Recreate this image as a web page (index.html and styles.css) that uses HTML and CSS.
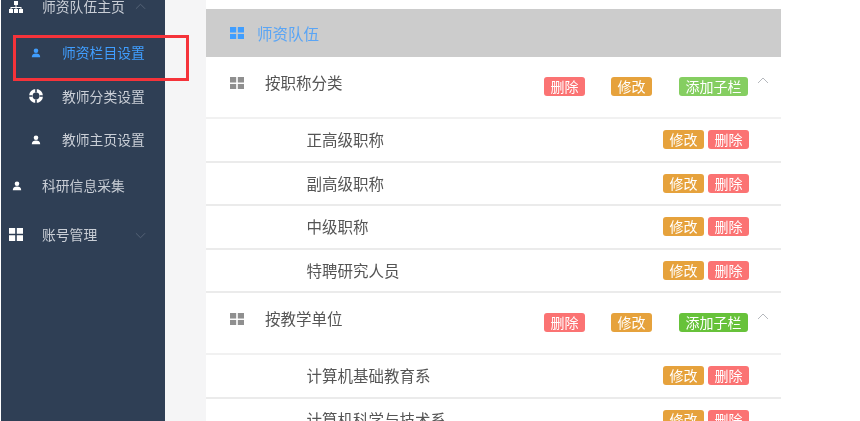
FILE: index.html
```html
<!DOCTYPE html>
<html lang="zh-CN">
<head>
  <meta charset="UTF-8">
  <title>师资队伍</title>
  <link rel="stylesheet" href="styles.css">
</head>
<body>

  <svg class="defs" width="0" height="0">
    <symbol id="i-user" viewBox="0 0 10 10">
      <circle cx="5" cy="2.8" r="2.3"/>
      <path d="M0.8 9.2C0.8 6.6 2.6 5.6 5 5.6S9.2 6.6 9.2 9.2Z"/>
    </symbol>
    <symbol id="i-grid" viewBox="0 0 14 14" preserveAspectRatio="none">
      <rect x="0" y="0" width="6.2" height="6.2"/>
      <rect x="7.8" y="0" width="6.2" height="6.2"/>
      <rect x="0" y="7.8" width="6.2" height="6.2"/>
      <rect x="7.8" y="7.8" width="6.2" height="6.2"/>
    </symbol>
    <symbol id="i-tree" viewBox="0 0 14 12">
      <rect x="5" y="0" width="4" height="4"/>
      <rect x="0" y="8" width="4" height="4"/>
      <rect x="5" y="8" width="4" height="4"/>
      <rect x="10" y="8" width="4" height="4"/>
      <path d="M6.5 4h1v2H12.5v2h-1V7h-4v1h-1V7h-4v1h-1V6h5z"/>
    </symbol>
    <symbol id="i-ring" viewBox="0 0 14 14">
      <path fill-rule="evenodd" d="M7 0a7 7 0 1 0 0 14A7 7 0 0 0 7 0Zm0 3.6a3.4 3.4 0 1 1 0 6.8 3.4 3.4 0 0 1 0-6.8Z"/>
      <path class="ring-cut" d="M7 0V3.4M7 10.6V14M0 7H3.4M10.6 7H14"/>
    </symbol>
  </svg>

  <div class="page">
    <aside class="sidebar">
      <div class="menu-item">
        <svg class="ico ico-tree"><use href="#i-tree"/></svg>
        <span class="menu-label">师资队伍主页</span>
        <svg class="arrow" viewBox="0 0 12 7"><path d="M1 6 6 1l5 5"/></svg>
      </div>
      <div class="sub-item active">
        <svg class="ico ico-user"><use href="#i-user"/></svg>
        <span>师资栏目设置</span>
      </div>
      <div class="sub-item">
        <svg class="ico ico-ring"><use href="#i-ring"/></svg>
        <span>教师分类设置</span>
      </div>
      <div class="sub-item">
        <svg class="ico ico-user"><use href="#i-user"/></svg>
        <span>教师主页设置</span>
      </div>
      <div class="menu-item">
        <svg class="ico ico-user"><use href="#i-user"/></svg>
        <span class="menu-label">科研信息采集</span>
      </div>
      <div class="menu-item">
        <svg class="ico ico-grid"><use href="#i-grid"/></svg>
        <span class="menu-label">账号管理</span>
        <svg class="arrow" viewBox="0 0 12 7"><path d="M1 1l5 5 5-5"/></svg>
      </div>
    </aside>

    <main class="content">
      <div class="panel-head">
        <svg class="grid-ico"><use href="#i-grid"/></svg>
        <span>师资队伍</span>
      </div>

      <div class="group">
        <svg class="grid-ico"><use href="#i-grid"/></svg>
        <span class="group-name">按职称分类</span>
        <span class="tag red">删除</span>
        <span class="tag orange">修改</span>
        <span class="tag light-green">添加子栏</span>
        <svg class="group-arrow" viewBox="0 0 12 7"><path d="M1 6 6 1l5 5"/></svg>
      </div>
      <div class="row"><span class="row-name">正高级职称</span><span class="tag orange">修改</span><span class="tag red">删除</span></div>
      <div class="row"><span class="row-name">副高级职称</span><span class="tag orange">修改</span><span class="tag red">删除</span></div>
      <div class="row"><span class="row-name">中级职称</span><span class="tag orange">修改</span><span class="tag red">删除</span></div>
      <div class="row"><span class="row-name">特聘研究人员</span><span class="tag orange">修改</span><span class="tag red">删除</span></div>

      <div class="group">
        <svg class="grid-ico"><use href="#i-grid"/></svg>
        <span class="group-name">按教学单位</span>
        <span class="tag red">删除</span>
        <span class="tag orange">修改</span>
        <span class="tag green">添加子栏</span>
        <svg class="group-arrow" viewBox="0 0 12 7"><path d="M1 6 6 1l5 5"/></svg>
      </div>
      <div class="row"><span class="row-name">计算机基础教育系</span><span class="tag orange">修改</span><span class="tag red">删除</span></div>
      <div class="row"><span class="row-name">计算机科学与技术系</span><span class="tag orange">修改</span><span class="tag red">删除</span></div>
    </main>
  </div>

  <div class="highlight"></div>

</body>
</html>
```

FILE: styles.css
```css
html, body {
  margin: 0;
  padding: 0;
  height: 421px;
  overflow: hidden;
  background: #fff;
}
body {
  font-family: "Noto Sans CJK SC", "Noto Sans", sans-serif;
  font-size: 15.5px;
}
.defs { position: absolute; }

.page {
  display: flex;
  height: 421px;
  overflow: hidden;
  padding-left: 1px;
  filter: blur(0.5px);
}

/* sidebar, scrolled a little past its top */
.sidebar {
  flex: 0 0 164px;
  background: #2f3f55;
  color: #c9ced6;
  font-size: 13.8px;
  line-height: 20px;
  overflow: hidden;
}
.menu-item {
  display: flex;
  align-items: center;
  height: 49px;
  padding-left: 8px;
  position: relative;
}
.menu-item:first-child { margin-top: -18px; height: 50px; }
.menu-label { position: absolute; left: 41px; top: 12px; }
.menu-item .ico-user { margin-left: 3px; margin-top: -2px; }
.menu-item .ico-grid { margin-top: -3px; }
.menu-item:first-child .menu-label { top: 14px; }
.arrow {
  position: absolute;
  left: 134px;
  top: 50%;
  width: 11px;
  height: 7px;
  margin-top: -4px;
  fill: none;
  stroke: #59677a;
  stroke-width: 1;
}
.sub-item {
  display: flex;
  align-items: center;
  height: 43.5px;
  padding-left: 29px;
  position: relative;
}
.sub-item span { position: absolute; left: 61px; top: 10px; }
.sub-item.active { color: #409eff; }
.ico { fill: #fff; display: block; flex: none; }
.active .ico { fill: #409eff; }
.ico-user { width: 10px; height: 10px; margin-left: 1px; margin-top: -1px; }
.ico-grid { width: 14px; height: 13px; }
.ico-tree { width: 14px; height: 12px; }
.ico-ring { width: 14px; height: 14px; margin-left: -1px; margin-top: -2px; }
.ring-cut { stroke: #2f3f55; stroke-width: 1.6; }

/* main column */
.content {
  width: 575px;
  margin-left: 41px;
  padding-top: 9px;
  background: #fff;
  box-shadow: -41px 0 0 #f5f5f6, -1px 0 0 #e9e9ee;
  color: #555;
}
.panel-head {
  display: flex;
  align-items: center;
  height: 48px;
  padding-left: 24px;
  background: #ccc;
  color: #5aa5f5;
}
.panel-head .grid-ico { fill: #409eff; margin-right: 13px; }
.grid-ico { width: 14px; height: 12.5px; fill: #8f8f8f; flex: none; }

.group {
  display: flex;
  align-items: center;
  height: 60px;
  padding-left: 24px;
  padding-right: 12px;
  border-bottom: 2px solid #f1f1f1;
  position: relative;
}
.group .grid-ico { margin-top: -8px; }
.group-name { margin-left: 21px; margin-top: -11px; margin-right: auto; }
.group .tag { margin-left: 26px; margin-top: -1px; }
.group .tag:nth-of-type(4) { margin-left: 27px; }
.group-arrow {
  width: 12px;
  height: 7px;
  margin-left: 9px;
  margin-top: -14px;
  fill: none;
  stroke: #b5b8bd;
  stroke-width: 1;
}

.row {
  display: flex;
  align-items: center;
  gap: 4px;
  height: 41.5px;
  padding-left: 100.5px;
  padding-right: 32px;
  border-bottom: 2px solid #ebebeb;
}
.row-name { margin-right: auto; margin-top: -1px; }

.tag {
  display: inline-block;
  height: 19px;
  line-height: 19px;
  padding: 0 6.5px;
  border-radius: 3px;
  font-size: 14px;
  color: #fff;
  white-space: nowrap;
}
.red { background: #fb7373; }
.orange { background: #e6a23c; }
.green { background: #67c23a; }
.light-green { background: #85ce61; }

/* annotation drawn over the screenshot */
.highlight {
  position: absolute;
  left: 13px;
  top: 35px;
  width: 170px;
  height: 40px;
  border: 3px solid #f5333a;
}
```
